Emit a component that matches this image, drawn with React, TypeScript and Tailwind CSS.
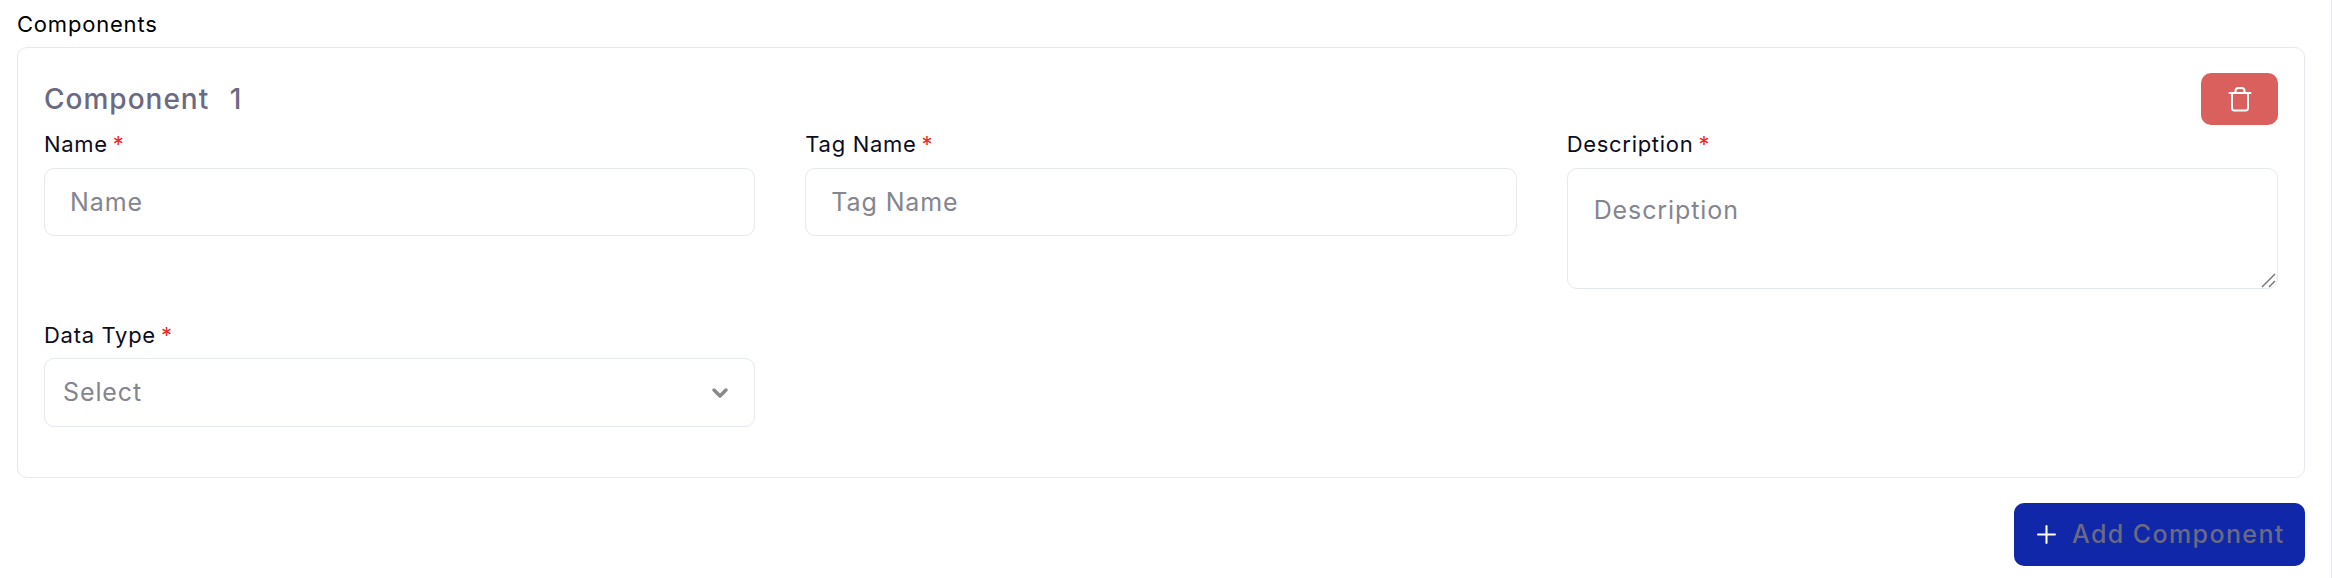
import { Plus, ChevronDown } from "lucide-react";

const font = "font-['Inter','Liberation_Sans',sans-serif]";

function Label({ text }: { text: string }) {
  return (
    <label className="block h-[35px] text-[22px] leading-[23px] tracking-[0.7px] text-[#0c0c1d]">
      {text}
      <span className="ml-[5px] text-[#f0281e]">*</span>
    </label>
  );
}

function BinIcon() {
  return (
    <svg width="24" height="26" viewBox="0 0 24 26" fill="none" stroke="white" strokeWidth="2" strokeLinecap="round" strokeLinejoin="round">
      <path d="M1.5 7h21" />
      <path d="M7.5 7V5a3 3 0 0 1 3-3h3a3 3 0 0 1 3 3v2" />
      <path d="M4 7v15a2.5 2.5 0 0 0 2.5 2.5h11A2.5 2.5 0 0 0 20 22V7" />
    </svg>
  );
}

export default function App() {
  return (
    <div className={`${font} min-h-[578px] border-r border-[#e6e8ef] bg-white pl-[17px] pr-[26px] pt-[12px]`}>
      <div className="h-[35px] text-[22px] leading-[25px] tracking-[0.8px] text-black">Components</div>

      {/* Component card */}
      <div className="h-[431px] rounded-[10px] border border-[#e6e8ef] px-[26px] pt-[25px]">
        <div className="flex h-[52px] items-center justify-between">
          <h3 className="text-[28px] font-medium tracking-[1px] text-[#6b6a82]">
            Component <span className="ml-[12px]">1</span>
          </h3>
          <button className="flex h-[52px] w-[77px] items-center justify-center rounded-[10px] bg-[#d9605c]">
            <BinIcon />
          </button>
        </div>

        <div className="mt-[8px] grid grid-cols-3 gap-x-[50px]">
          <div>
            <Label text="Name" />
            <input
              placeholder="Name"
              className="h-[68px] w-full rounded-[10px] border border-[#e6e8ef] px-[25px] text-[25px] tracking-[0.9px] placeholder:text-[#85858f]"
            />
          </div>
          <div>
            <Label text="Tag Name" />
            <input
              placeholder="Tag Name"
              className="h-[68px] w-full rounded-[10px] border border-[#e6e8ef] px-[25px] text-[25px] tracking-[0.9px] placeholder:text-[#85858f]"
            />
          </div>
          <div>
            <Label text="Description" />
            <div className="relative">
              <textarea
                placeholder="Description"
                className="block h-[121px] w-full resize-none rounded-[10px] border border-[#e6e8ef] px-[26px] pt-[26px] text-[25px] leading-[30px] tracking-[0.9px] placeholder:text-[#85858f]"
              />
              {/* resize grip */}
              <svg className="absolute bottom-[1px] right-[2px]" width="15" height="15" viewBox="0 0 15 15" fill="none" stroke="#777" strokeWidth="1.5">
                <path d="M1 14 14 1" />
                <path d="M8 14l6-6" />
              </svg>
            </div>
          </div>
        </div>

        <div className="mt-[34px] grid grid-cols-3 gap-x-[50px]">
          <div>
            <div className="pt-[1px]">
              <Label text="Data Type" />
            </div>
            <div className="-mt-[1px] flex h-[69px] items-center justify-between rounded-[10px] border border-[#e6e8ef] pl-[18px] pr-[22px] text-[25px] tracking-[0.9px] text-[#85858f]">
              <span>Select</span>
              <ChevronDown className="h-[24px] w-[24px] text-[#8a8a8a]" strokeWidth={3.5} />
            </div>
          </div>
        </div>
      </div>

      <div className="mt-[25px] flex justify-end">
        <button className="flex h-[63px] w-[291px] items-center gap-[11px] rounded-[10px] bg-[#0f27a8] pl-[18px] text-[25px] font-medium tracking-[1.4px] text-[#6b6a82]">
          <Plus className="h-[29px] w-[29px] text-white" strokeWidth={1.7} />
          Add Component
        </button>
      </div>
    </div>
  );
}
